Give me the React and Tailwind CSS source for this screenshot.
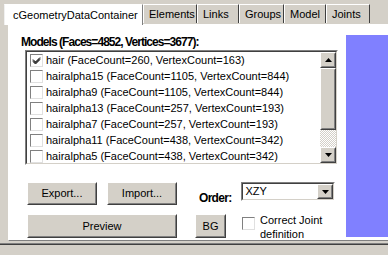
import React from 'react';

const rows = [
  { name: 'hair', faces: 260, verts: 163, checked: true },
  { name: 'hairalpha15', faces: 1105, verts: 844 },
  { name: 'hairalpha9', faces: 1105, verts: 844 },
  { name: 'hairalpha13', faces: 257, verts: 193 },
  { name: 'hairalpha7', faces: 257, verts: 193 },
  { name: 'hairalpha11', faces: 438, verts: 342 },
  { name: 'hairalpha5', faces: 438, verts: 342 },
];

const tabs = ['Elements', 'Links', 'Groups', 'Model', 'Joints'];
const tabW = { Elements: 54, Links: 42, Groups: 45, Model: 42, Joints: 44 };

// classic win32 raised button
const Btn = ({ children, className = '' }) => (
  <div className={`border border-t-white border-l-white border-b-[#404040] border-r-[#404040] bg-[#d4d0c8] ${className}`}>
    <div className="w-full h-full flex items-center justify-center border border-t-[#d4d0c8] border-l-[#d4d0c8] border-b-[#808080] border-r-[#808080]">
      {children}
    </div>
  </div>
);

const Check = ({ checked }) => (
  <div className="w-[13px] h-[13px] shrink-0 border border-t-[#808080] border-l-[#808080] border-b-[#e0e0e0] border-r-[#e0e0e0] bg-white flex items-center justify-center">
    {checked && (
      <svg width="9" height="9" viewBox="0 0 9 9">
        <path d="M1 3.5 L3.5 6 L8 1.5 M1 4.5 L3.5 7 L8 2.5 M1 5.5 L3.5 8 L8 3.5" stroke="#000" strokeWidth="1" fill="none" />
      </svg>
    )}
  </div>
);

const Arrow = ({ down }) => (
  <svg width="7" height="4" viewBox="0 0 7 4">
    <path d={down ? 'M0 0 H7 L3.5 4 Z' : 'M0 4 H7 L3.5 0 Z'} fill="#000" />
  </svg>
);

export default function App() {
  return (
    <div className="w-[388px] h-[255px] overflow-hidden bg-[#d4d0c8] text-[11px] text-black" style={{ fontFamily: '"Liberation Sans", Arial, sans-serif' }}>
      {/* tab strip */}
      <div className="flex items-end h-[24px] pl-[4px]">
        <div className="h-[21px] w-[139px] bg-white border-t border-l border-r border-t-white border-l-[#f0f0f0] border-r-[#808080] flex items-center pl-[8px] relative z-10 -mb-[1px]">
          cGeometryDataContainer
        </div>
        {tabs.map((t) => (
          <div key={t} style={{ width: tabW[t] }} className="h-[19px] bg-[#d4d0c8] border-t border-l border-r border-t-white border-l-white border-r-[#404040] flex items-center pl-[5px] mb-[1px]">
            {t}
          </div>
        ))}
      </div>

      {/* tab page */}
      <div className="ml-[8px] h-[217px] bg-white border-t border-l border-b border-t-white border-l-white border-b-[#808080] flex">
        <div className="w-[337px] shrink-0 flex flex-col">
          <div className="mt-[10px] ml-[12px] h-[15px] leading-[15px] text-[12px] font-bold tracking-[-0.95px] whitespace-nowrap">
            Models (Faces=4852, Vertices=3677):
          </div>

          {/* listbox */}
          <div className="ml-[16px] w-[313px] h-[115px] border border-t-[#808080] border-l-[#808080] border-b-white border-r-white">
            <div className="w-full h-full border border-t-[#404040] border-l-[#404040] border-b-[#d4d0c8] border-r-[#d4d0c8] flex">
              <div className="flex-1 flex flex-col">
                {rows.map((r) => (
                  <div key={r.name} className="h-[16px] flex items-center pl-[3px] gap-[3px] whitespace-nowrap">
                    <Check checked={r.checked} />
                    <span>{r.name} (FaceCount={r.faces}, VertexCount={r.verts})</span>
                  </div>
                ))}
              </div>
              {/* scrollbar */}
              <div className="w-[16px] flex flex-col bg-[repeating-conic-gradient(#d4d0c8_0_25%,#ffffff_0_50%)] bg-[length:2px_2px]">
                <Btn className="h-[16px] w-[16px]"><Arrow /></Btn>
                <Btn className="h-[62px] w-[16px]" />
                <div className="flex-1" />
                <Btn className="h-[16px] w-[16px]"><Arrow down /></Btn>
              </div>
            </div>
          </div>

          {/* buttons row 1 */}
          <div className="flex items-start mt-[17px]">
            <Btn className="ml-[18px] w-[70px] h-[23px]">Export...</Btn>
            <Btn className="ml-[10px] w-[70px] h-[23px]">Import...</Btn>
            <div className="ml-[22px] mt-[9px] text-[12px] font-bold tracking-[-0.7px] leading-[15px]">Order:</div>
            <div className="ml-[10px] w-[94px] h-[19px] border border-t-[#808080] border-l-[#808080] border-b-white border-r-white">
              <div className="w-full h-full border border-t-[#404040] border-l-[#404040] border-b-[#d4d0c8] border-r-[#d4d0c8] bg-white flex">
                <div className="flex-1 pl-[2px] leading-[15px]">XZY</div>
                <Btn className="w-[16px] h-full"><Arrow down /></Btn>
              </div>
            </div>
          </div>

          {/* buttons row 2 */}
          <div className="flex items-start mt-[8px]">
            <Btn className="ml-[18px] w-[150px] h-[24px]">Preview</Btn>
            <Btn className="ml-[18px] w-[31px] h-[24px]">BG</Btn>
            <div className="ml-[16px] mt-[3px]"><Check /></div>
            <div className="ml-[5px] leading-[14px] -mt-[1px]">Correct Joint<br />definition</div>
          </div>
        </div>

        <div className="flex-1 mt-[10px] mb-[3px] bg-[#8080ff]" />
      </div>

      <div className="mt-[2px] h-[1px] bg-[#808080]" />
      <div className="h-[1px] bg-[#404040]" />
    </div>
  );
}
